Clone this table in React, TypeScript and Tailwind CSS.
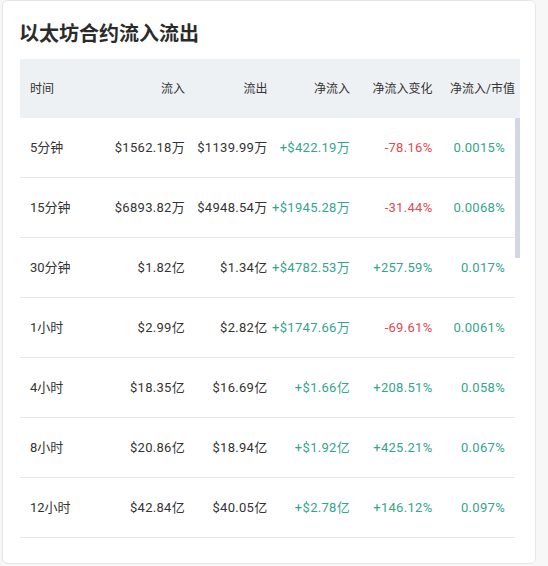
import React from "react";

type Row = {
  t: string;
  inflow: string;
  outflow: string;
  net: string;
  change: string;
  ratio: string;
};

const rows: Row[] = [
  { t: "5分钟", inflow: "$1562.18万", outflow: "$1139.99万", net: "+$422.19万", change: "-78.16%", ratio: "0.0015%" },
  { t: "15分钟", inflow: "$6893.82万", outflow: "$4948.54万", net: "+$1945.28万", change: "-31.44%", ratio: "0.0068%" },
  { t: "30分钟", inflow: "$1.82亿", outflow: "$1.34亿", net: "+$4782.53万", change: "+257.59%", ratio: "0.017%" },
  { t: "1小时", inflow: "$2.99亿", outflow: "$2.82亿", net: "+$1747.66万", change: "-69.61%", ratio: "0.0061%" },
  { t: "4小时", inflow: "$18.35亿", outflow: "$16.69亿", net: "+$1.66亿", change: "+208.51%", ratio: "0.058%" },
  { t: "8小时", inflow: "$20.86亿", outflow: "$18.94亿", net: "+$1.92亿", change: "+425.21%", ratio: "0.067%" },
  { t: "12小时", inflow: "$42.84亿", outflow: "$40.05亿", net: "+$2.78亿", change: "+146.12%", ratio: "0.097%" },
];

const green = "text-[#33a58b]";
const red = "text-[#e2494f]";

export default function App() {
  return (
    <div
      className="w-[548px] h-[566px] bg-[#f7f7f8] pl-[2px] overflow-hidden"
      style={{ fontFamily: 'Roboto, "Noto Sans CJK SC", sans-serif' }}
    >
      <div className="w-[534px] h-[564px] bg-white border border-[#e6e6e6] rounded-[6px] pl-[17px] pt-[19px] overflow-hidden">
        <h1 className="text-[20px] leading-[28px] font-bold text-[#2b2b2b] mb-[11px] -ml-[1px]">
          以太坊合约流入流出
        </h1>
        <div className="w-[500px]">
          <div className="flex h-[59px] bg-[#eef1f4] items-center text-[12px] text-[#333]">
            <div className="grid grid-cols-6 w-[495px]">
              <div className="pl-[10px]">时间</div>
              <div className="text-right">流入</div>
              <div className="text-right">流出</div>
              <div className="text-right">净流入</div>
              <div className="text-right">净流入变化</div>
              <div className="text-right">净流入/市值</div>
            </div>
          </div>
          <div className="flex h-[420px] overflow-hidden">
            <div className="w-[495px] text-[13px] text-[#333] tracking-[0.3px]">
              {rows.map((r) => {
                const neg = r.change.startsWith("-");
                return (
                  <div
                    key={r.t}
                    className="grid grid-cols-6 h-[60px] items-center border-b border-[#e8e8e8]"
                  >
                    <div className="pl-[10px] whitespace-nowrap tracking-normal">{r.t}</div>
                    <div className="text-right whitespace-nowrap">{r.inflow}</div>
                    <div className="text-right whitespace-nowrap">{r.outflow}</div>
                    <div className={`text-right whitespace-nowrap ${green}`}>{r.net}</div>
                    <div className={`text-right whitespace-nowrap ${neg ? red : green}`}>{r.change}</div>
                    <div className={`text-right whitespace-nowrap pr-[10px] ${green}`}>{r.ratio}</div>
                  </div>
                );
              })}
            </div>
            <div className="w-[5px]">
              <div className="h-[140px] bg-[#d3d6e4]" />
            </div>
          </div>
        </div>
      </div>
    </div>
  );
}
